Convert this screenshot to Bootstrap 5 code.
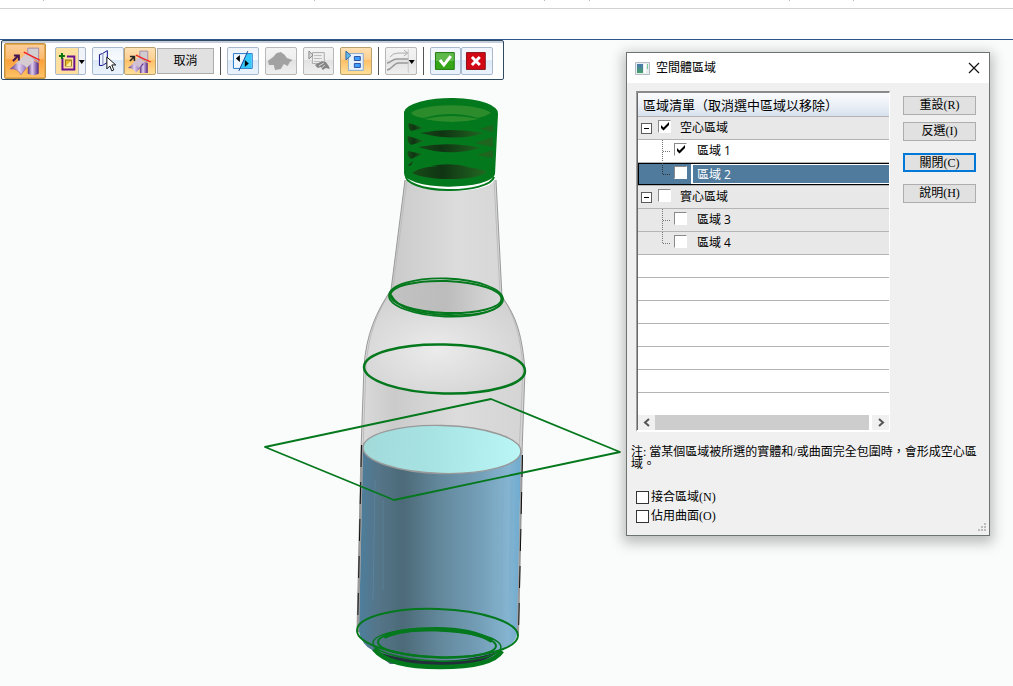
<!DOCTYPE html>
<html lang="zh-Hant">
<head>
<meta charset="utf-8">
<meta name="viewport" content="width=device-width, initial-scale=1">
<title>空間體區域</title>
<link href="https://cdn.jsdelivr.net/npm/bootstrap@5.3.0/dist/css/bootstrap.min.css" rel="stylesheet">
<style>
  body { background: #fafcfb; color: #000; font: 12px/16px "Open Sans", "Noto Sans CJK TC", sans-serif; }
  .strip { height: 9px; border-bottom: 1px solid #d2d2d2; background: #fff; }
  .strip svg { display: block; }
  .blank-bar { height: 31px; border-bottom: 1px solid #2f568c; background: #fff; }

  .toolbar { height: 40px; width: 503px; margin-left: 1px; padding: 2px 10px 0 2px; background: #fff; border: 1px solid #2f4a63; border-radius: 2px; box-shadow: inset 0 2px 0 #c5cddb; }
  .tool { padding: 0; width: 32px; height: 28px; border: 1px solid #a9b9cd; border-radius: 2px; background: linear-gradient(#eef4fb, #f8fbfe 45%, #dce9f6 46%, #eaf4fd); }
  .tool svg { display: block; width: 100%; height: 100%; }
  .tool-big { width: 42px; height: 36px; }
  .tool-hot { border: 1px solid #c4933f; box-shadow: inset 0 0 0 1px #e8a850; background: linear-gradient(#fbcf9d, #fdb869 45%, #fc9f38 46%, #ffc468); }
  .tool-on { border-color: #b9a06e; background: linear-gradient(#fde0b4, #fdcf8e 45%, #fdbe64 46%, #ffe09a); }
  .tool-pick { background: linear-gradient(90deg, #fddf9f 0 22px, #b9b9c4 22px 23px, #f0f3f8 23px); }
  .tool-off { border-color: #b8b8b8; background: linear-gradient(#f4f4f4, #eee 45%, #e2e2e2 46%, #efefef); }
  .tool-text { width: 58px; height: 26px; border: 1px solid #adadad; background: #e1e1e1; padding: 0; font: 12px/22px "Liberation Serif", "Noto Sans CJK TC", serif; }
  .sep { width: 1px; height: 28px; background: #555; }
  .toolbar .gap-a { margin-left: 9px; }
  .toolbar .gap-b { margin-left: 6px; }
  .toolbar .gap-c { margin-left: 1px; }

  .scene { display: block; width: 362px; max-width: 100%; margin-left: 262px; }

  .panel { top: 12px; right: 23px; width: 364px; border: 1px solid #6c7370; background: #f0f0f0; box-shadow: 0 4px 12px 3px rgba(0,0,0,.25); }
  .panel-title { height: 30px; background: #fff; padding: 0 9px 0 8px; }
  .panel-title h1 { font: 12px/16px "Open Sans", "Noto Sans CJK TC", sans-serif; margin: 0 0 0 6px; }
  .close-x { border: 0; padding: 0; background: none; width: 12px; height: 12px; }
  .close-x svg { display: block; }
  .panel-body { padding: 8px 13px 0 9px; }

  .list { width: 254px; border: solid; border-width: 2px 1px 2px 1px; border-color: #8a8a8a #fff #fff #a0a0a0; box-shadow: inset 1px 0 0 #696969; padding-left: 1px; background: #fff; }
  .tree { width: 100%; border-collapse: separate; border-spacing: 0; }
  .tree th { height: 24px; padding: 0 5px; border-bottom: 1px solid #b4b4b4; font-weight: 400; font-size: 13px; line-height: 20px; background: linear-gradient(#fafbfd, #e9eef5 60%, #d6e0ec); }
  .tree td { height: 23px; padding: 0; border-bottom: 1px solid #b4b4b4; }
  .tree tr:last-child td { height: 22px; border-bottom: 0; }
  .line { height: 22px; }
  .line label { line-height: 24px; }
  .shade { background: #e8e8e8; }
  .root { padding-left: 3px; }
  .root label { margin-left: 9px; }
  .leaf { padding-left: 20px; }
  .leaf label { margin-left: 4px; padding-left: 6px; flex-grow: 1; }
  .guide { width: 16px; height: 22px; flex: none; }
  .chosen { background: #507b9d; color: #fff; box-shadow: inset 0 1px 0 #000, inset 1px 0 0 #000, inset 0 -1px 0 #000; }
  .chosen label { height: 20px; line-height: 20px; border: solid #fff; border-width: 1px 0 1px 2px; padding-left: 4px; }
  .expander { width: 11px; height: 11px; padding: 0; border: 1px solid #5c5c5c; background: #fff; margin-right: 6px; }
  .expander svg { display: block; }
  .box3d, .boxflat { appearance: none; flex: none; width: 13px; height: 13px; margin: 0; background: #fff; }
  .box3d { border: 1px solid #fff; border-top-color: #8a8a8a; border-left-color: #8a8a8a; margin-bottom: 4px; }
  .box3d:checked { background: #fff url("data:image/svg+xml,%3Csvg xmlns='http://www.w3.org/2000/svg' viewBox='0 0 11 11'%3E%3Cpath d='M2 4v3l2.500 2.500L10 4V1L4.500 6.500z'/%3E%3C/svg%3E") center/11px no-repeat; }
  .boxflat { border: 1px solid #333; }
  .scroller { height: 15px; }
  .scroller button { width: 17px; height: 15px; border: 0; padding: 0; background: #f0f0f0; }
  .scroller svg { display: block; margin: auto; }
  .thumb { background: #cdcdcd; margin-right: 3px; }

  .acts { width: 73px; padding-top: 5px; }
  .act { height: 19px; border: 1px solid #adadad; background: #e1e1e1; padding: 0; font: 12px/15px "Liberation Serif", "Noto Sans CJK TC", serif; margin-bottom: 12px; }
  .act-near { margin-bottom: 7px; }
  .act-main { border: 2px solid #0078d7; line-height: 12px; }
  .note { margin: 14px 9px 0 4px; font: 12px/12px "Liberation Serif", "Noto Sans CJK TC", serif; }
  .opts { margin: 18px 0 0 9px; padding-bottom: 9px; font: 12px/19px "Liberation Serif", "Noto Sans CJK TC", serif; }
  .opts label { margin-left: 2px; }
  .grip { right: 2px; bottom: 2px; }
</style>
</head>
<body class="d-flex flex-column min-vh-100 overflow-hidden">
  <div class="strip">
    <svg width="900" height="1" aria-hidden="true"><path d="M43 .5h1M314 .5h1M544 .5h1M589 .5h1M789 .5h1M853 .5h1" stroke="#bbb"/></svg>
  </div>
  <div class="blank-bar"></div>

  <main class="position-relative flex-grow-1">
    <div class="toolbar d-flex align-items-center" role="toolbar">
      <button class="tool tool-big tool-hot" aria-label="空間體">
        <svg viewBox="0 0 40 34"><defs><linearGradient id="pu"><stop stop-color="#54307c"/><stop offset=".4" stop-color="#e3d0f0"/><stop offset="1" stop-color="#4b2180"/></linearGradient></defs>
          <path d="M23 4h11v14l-11-7z" fill="#d2cfd2" stroke="#a48aae"/><path d="M23 14l11 5v11q-5 3-11 0z" fill="url(#pu)"/><path d="M22 11l6 5-12 15q-3-7-11-6z" fill="url(#pu)" stroke="#8b5ca0" stroke-width=".6"/><path d="M22 9l8 7-8 8q-5-6-12-4z" fill="#d5cbd0"/><path d="M19 8l16 8" stroke="#f02020" stroke-width="1.400"/><path d="M8 17l5-5M9 11.500h5v5" stroke="#42154f" stroke-width="2" fill="none"/></svg>
      </button>
      <button class="tool tool-pick gap-a" aria-label="新增">
        <svg viewBox="0 0 30 26"><path d="M6.500 10v11.500h12V8.500H11" fill="none" stroke="#6a118f" stroke-width="2"/><rect x="9.500" y="12" width="6" height="6" fill="#e5b82d" stroke="#93701b"/><path d="M15 13v5h-5z" fill="#fff09b"/><path d="M3 8h6M6 5v6" stroke="#08730e" stroke-width="2"/><path d="M23 12h6l-3 4z"/></svg>
      </button>
      <button class="tool gap-b" aria-label="選取">
        <svg viewBox="0 0 30 26"><path d="M6.500 6.500l3-1 5-3v12l-5 3h-3z" fill="#edf4fb" stroke="#11118c"/><path d="M10 5v12" stroke="#7d84b8"/><path d="M14 9v12l3-3 2 5 2-1-2-5h4z" fill="#fff" stroke="#111"/></svg>
      </button>
      <button class="tool tool-on" aria-label="修剪">
        <svg viewBox="0 0 30 26"><path d="M15 3h8v11l-8-4z" fill="#d0ccd0" stroke="#a68fb0"/><path d="M15 12l8 3v10h-8z" fill="url(#pu)"/><path d="M14 11l5 5-8 9q-2-5-8-5z" fill="url(#pu)"/><path d="M14 9l5 5-5 6q-3-4-7-4z" fill="#cfbfd0"/><path d="M11 7l15 7" stroke="#f02020" stroke-width="1.300"/><path d="M5 13l4-4M5 8.500h4.500V13" stroke="#222" stroke-width="1.600" fill="none"/></svg>
      </button>
      <button class="tool-text gap-c">取消</button>
      <span class="sep gap-b"></span>
      <button class="tool gap-b" aria-label="切換側">
        <svg viewBox="0 0 30 26"><path d="M5.500 5.500h19v15h-19z" fill="#eef7ff" stroke="#2878c8"/><path d="M19 6h5v14H12z" fill="#35c8fa"/><path d="M20 3l-9 20" stroke="#16449c"/><path d="M12 7v7l-4-3.500zM17 12v7l4-3.500z"/></svg>
      </button>
      <button class="tool tool-off gap-b" aria-label="預覽">
        <svg viewBox="0 0 30 26"><path d="M2 13c3-3 5-3 7-6 2-3 4-2 6-3l4 3 2 3 6 2-3 2-2 4-4-2-3 5-6 1-1-5H3z" fill="#a2a2a2"/></svg>
      </button>
      <button class="tool tool-off gap-b" aria-label="特性">
        <svg viewBox="0 0 30 26"><path d="M8.500 4.500h12v11h-12z" fill="#eee" stroke="#aaa"/><path d="M10 7.500h8M10 10.500h8M10 13.500h6" stroke="#bbb"/><path d="M5 3v8l4-4z" fill="#ddd" stroke="#888"/><path d="M11 17l7-4 4 1 3 4 1 3-4-1-3 2-2-3-3 1z" fill="#858585"/><path d="M15 18l5-3M18 20l3-3" stroke="#ddd"/></svg>
      </button>
      <button class="tool tool-on gap-b" aria-label="區域清單">
        <svg viewBox="0 0 30 26"><path d="M7.500 5.500h15v17h-15z" fill="#e8f3fc" stroke="#8eabd0"/><path d="M5 3v9l5-4.500z" fill="#60b8e8" stroke="#336aa8"/><path d="M13.500 8.500h6v4h-6zM13.500 15.500h6v4h-6z" fill="#3e9fff" stroke="#3050a0"/></svg>
      </button>
      <span class="sep gap-b"></span>
      <button class="tool tool-off gap-b" aria-label="曲線">
        <svg viewBox="0 0 30 26"><path d="M1 15C5 15 6 11 11 11h12M1 22C6 22 7 15 13 15h10" fill="none" stroke="#999" stroke-width="1.500"/><path d="M4 9q3-4 8-4h10M18 2l4 3-4 3" fill="none" stroke="#aaa"/><path d="M22.500 1v24" stroke="#c8c8c8"/><path d="M23 12h6l-3 4z"/></svg>
      </button>
      <span class="sep gap-b"></span>
      <button class="tool gap-b" aria-label="接受">
        <svg viewBox="0 0 30 26"><path d="M4.500 4.500h19v17h-19z" fill="#36a619" stroke="#21780d"/><path d="M5 5h18v8H5z" fill="#5fb84a"/><path d="M9 12l4 5 7-9" fill="none" stroke="#fff" stroke-width="3"/></svg>
      </button>
      <button class="tool" aria-label="取消特徵">
        <svg viewBox="0 0 30 26"><path d="M4.500 4.500h19v17h-19z" fill="#d20914" stroke="#8b1018"/><path d="M10 9l8 8M18 9l-8 8" stroke="#fff" stroke-width="3"/></svg>
      </button>
    </div>

    <svg class="scene" viewBox="262 80 362 600" role="img" aria-label="瓶子模型">
      <defs>
        <linearGradient id="glass"><stop stop-color="#dcdcdc"/><stop offset=".22" stop-color="#cbcbcb"/><stop offset=".6" stop-color="#dcdcdc"/><stop offset="1" stop-color="#d4d4d4"/></linearGradient>
        <radialGradient id="glow" cx=".45" cy=".55" r=".6"><stop stop-color="#ebebeb"/><stop offset="1" stop-color="#d2d2d2"/></radialGradient>
        <linearGradient id="water"><stop stop-color="#4d7e9c"/><stop offset=".12" stop-color="#557588"/><stop offset=".27" stop-color="#4c6a78"/><stop offset=".5" stop-color="#63889c"/><stop offset=".75" stop-color="#749fb8"/><stop offset=".92" stop-color="#85b4d0"/><stop offset="1" stop-color="#6eabd0"/></linearGradient>
        <linearGradient id="surface"><stop stop-color="#a2dada"/><stop offset=".4" stop-color="#a7e2e2"/><stop offset="1" stop-color="#bbf6f6"/></linearGradient>
        <linearGradient id="thread"><stop stop-color="#184d18"/><stop offset=".4" stop-color="#103413"/><stop offset="1" stop-color="#226a22"/></linearGradient>
        <linearGradient id="throat"><stop stop-color="#c2c2c2"/><stop offset=".5" stop-color="#bcbcbc"/><stop offset="1" stop-color="#dadada"/></linearGradient>
      </defs>
      <path d="M405 180L391 290C376 312 366 335 364 367L361 450 357 632H518L522 452 525 370C522 336 517 317 502 297L496 180z" fill="url(#glass)"/>
      <path d="M390 296C376 312 366 335 364 367A80 25 2 0 0 525 370C522 336 517 317 502 297z" fill="url(#glow)"/>
      <path d="M407 180L393 288C378 309 368 335 366 367L363 450 359 632M494 180l6 113C515 315 521 337 523 370l-4 84-2 180" fill="none" stroke="#bdbdbd"/>
      <path d="M405 180L391 290C376 312 366 335 364 367L361 450 357 632M496 180l6 117C517 317 522 336 525 370l-3 82-4 183" fill="none" stroke="#999"/>
      <ellipse cx="446" cy="297" rx="56" ry="16" transform="rotate(2 446 297)" fill="url(#throat)"/>

      <path d="M363 450L359 632Q362 645 372 650L390 664H485L502 650Q515 645 517 634L521 452z" fill="url(#water)"/>
      <path d="M375 480l-2 120M383 500v90M503 475l-2 150M512 480l-3 130" stroke="#6ea6c6" opacity=".25" fill="none"/>
      <ellipse cx="442" cy="449.500" rx="79" ry="24" transform="rotate(1.500 442 449.500)" fill="url(#surface)" stroke="#999" stroke-width="1.400"/>
      <path d="M362 445L358 632M522 455L518 635" stroke="#999" stroke-width="2"/>
      <path d="M361.500 445L357.500 632M522.500 455L518.500 635" stroke="#111" stroke-dasharray="22 15"/>

      <path d="M377 652Q435 670 498 652Q480 667 437 668Q395 668 377 652z" fill="#222f3a"/>
      <g fill="none" stroke="#04781c" stroke-linejoin="round">
        <ellipse cx="437.500" cy="633" rx="80.500" ry="24" transform="rotate(2 437.500 633)" stroke-width="2"/>
        <ellipse cx="437" cy="645" rx="64" ry="16" transform="rotate(2 437 645)" stroke-width="1.500"/>
        <ellipse cx="437" cy="644" rx="59" ry="13.500" transform="rotate(2 437 644)" stroke-width="2"/>
        <path d="M384 637Q400 629 436 629T492 641" stroke-width="4"/>
        <path d="M374 649Q388 667 440 667T502 651" stroke-width="4.500"/>
        <ellipse cx="444.500" cy="369" rx="80.500" ry="24.500" transform="rotate(1.500 444.500 369)" stroke-width="2.500"/>
        <ellipse cx="446" cy="297.500" rx="57" ry="19" transform="rotate(2 446 297.500)" stroke-width="1.800"/>
        <ellipse cx="446" cy="297" rx="55.500" ry="16" transform="rotate(2 446 297)" stroke-width="2"/>
        <path d="M391 295Q400 314 450 315T502 299" stroke-width="1.800"/>
        <path d="M265 447L491 399 620 452 394 500z" stroke-width="1.800"/>
      </g>

      <path d="M407 174v5a44 13 1 0 0 87 2v-5z" fill="#fff"/>
      <path d="M406 175a44 14 0 0 0 88 2" fill="none" stroke="#04781c" stroke-width="2"/>
      <path d="M404 112A47 15 0 0 1 498 114L495 174A45 13 0 0 1 404 173z" fill="#04781c"/>
      <path d="M411 113A41 10 0 0 1 491 113Q484 117 478 118Q451 110 424 118Q414 117 411 113z" fill="#2c8c2c"/>
      <path d="M424 119q27-6 55 0q-27 6-55 0z" fill="#2c8c2c"/>
      <g fill="url(#thread)">
        <path d="M420 133q30-6 64 0q-28 9-64 0zM418 147q32-6 62 1q-30 9-62-1zM412 173q10-8 38-7t37 6q-10 7-36 7t-39-6zM431 166q20-4 38 1z"/>
        <path d="M409 123l14 5-12 3q-4-4-2-8zM408 136l16 5-13 4q-5-4-3-9zM408 151l14 3-11 5q-5-4-3-8zM408 165l5-4-3 7z"/>
        <path d="M493 125v7l-13-3zM493 137v10l-18-4zM493 150v8l-16-3z" fill="#1f641f"/>
      </g>
      <path d="M408 168q45-20 85 2" fill="none" stroke="#04781c" stroke-width="3"/>
    </svg>

    <section class="panel position-absolute" role="dialog" aria-labelledby="dlg">
      <header class="panel-title d-flex align-items-center">
        <svg width="15" height="13" viewBox="0 0 15 13" aria-hidden="true"><defs><linearGradient id="ap" x2="0" y2="1"><stop stop-color="#4a78b0"/><stop offset="1" stop-color="#45a068"/></linearGradient></defs><path d="M.5.5h14v12H.5z" fill="#e9edf0" stroke="#b4bcc4"/><path d="M2 2h6v9H2z" fill="url(#ap)"/><path d="M9 2h2v9H9z" fill="#fff"/><path d="M12 2h1v5h-1z" fill="#7c9"/></svg>
        <h1 id="dlg" class="flex-grow-1">空間體區域</h1>
        <button class="close-x" aria-label="關閉視窗"><svg width="12" height="12"><path d="M1 1l10 10M11 1L1 11" stroke="#111" stroke-width="1.200"/></svg></button>
      </header>
      <div class="panel-body d-flex justify-content-between align-items-start">
        <div class="list">
          <table class="tree">
            <thead><tr><th scope="col">區域清單（取消選中區域以移除）</th></tr></thead>
            <tbody>
              <tr><td class="shade"><div class="line root d-flex align-items-center"><button class="expander" aria-label="收合"><svg width="9" height="9"><path d="M2 4.500h5" stroke="#000"/></svg></button><input class="box3d" type="checkbox" id="g1" checked><label for="g1">空心區域</label></div></td></tr>
              <tr><td><div class="line leaf d-flex align-items-center"><svg class="guide"><path d="M4.500 0v22M5 11.500h7" stroke="#777" stroke-dasharray="1 1"/></svg><input class="box3d" type="checkbox" id="r1" checked><label for="r1">區域 1</label></div></td></tr>
              <tr><td class="chosen"><div class="line leaf d-flex align-items-center"><svg class="guide"><path d="M4.500 0v11M5 11.500h7" stroke="#333" stroke-dasharray="1 1"/></svg><input class="box3d" type="checkbox" id="r2"><label for="r2">區域 2</label></div></td></tr>
              <tr><td class="shade"><div class="line root d-flex align-items-center"><button class="expander" aria-label="收合"><svg width="9" height="9"><path d="M2 4.500h5" stroke="#000"/></svg></button><input class="box3d" type="checkbox" id="g2"><label for="g2">實心區域</label></div></td></tr>
              <tr><td class="shade"><div class="line leaf d-flex align-items-center"><svg class="guide"><path d="M4.500 0v22M5 11.500h7" stroke="#777" stroke-dasharray="1 1"/></svg><input class="box3d" type="checkbox" id="r3"><label for="r3">區域 3</label></div></td></tr>
              <tr><td class="shade"><div class="line leaf d-flex align-items-center"><svg class="guide"><path d="M4.500 0v11M5 11.500h7" stroke="#777" stroke-dasharray="1 1"/></svg><input class="box3d" type="checkbox" id="r4"><label for="r4">區域 4</label></div></td></tr>
              <tr><td></td></tr><tr><td></td></tr><tr><td></td></tr><tr><td></td></tr><tr><td></td></tr><tr><td></td></tr><tr><td></td></tr>
            </tbody>
          </table>
          <div class="scroller d-flex">
            <button aria-label="向左"><svg width="8" height="9"><path d="M6 1L2 4.500 6 8" fill="none" stroke="#555" stroke-width="2"/></svg></button>
            <div class="thumb flex-grow-1"></div>
            <button aria-label="向右"><svg width="8" height="9"><path d="M2 1l4 3.500L2 8" fill="none" stroke="#555" stroke-width="2"/></svg></button>
          </div>
        </div>
        <div class="acts d-flex flex-column">
          <button class="act act-near">重設(R)</button>
          <button class="act">反選(I)</button>
          <button class="act act-main">關閉(C)</button>
          <button class="act">說明(H)</button>
        </div>
      </div>
      <p class="note">注: 當某個區域被所選的實體和/或曲面完全包圍時，會形成空心區域。</p>
      <div class="opts">
        <div class="d-flex align-items-center"><input class="boxflat" type="checkbox" id="o1"><label for="o1">接合區域(N)</label></div>
        <div class="d-flex align-items-center"><input class="boxflat" type="checkbox" id="o2"><label for="o2">佔用曲面(O)</label></div>
      </div>
      <svg class="grip position-absolute" width="10" height="10" aria-hidden="true"><path d="M7 1h2M4 4h2M7 4h2M1 7h2M4 7h2M7 7h2" stroke="#bcbcbc" stroke-width="2"/></svg>
    </section>
  </main>
  <script src="https://cdn.jsdelivr.net/npm/bootstrap@5.3.0/dist/js/bootstrap.bundle.min.js"></script>
</body>
</html>
